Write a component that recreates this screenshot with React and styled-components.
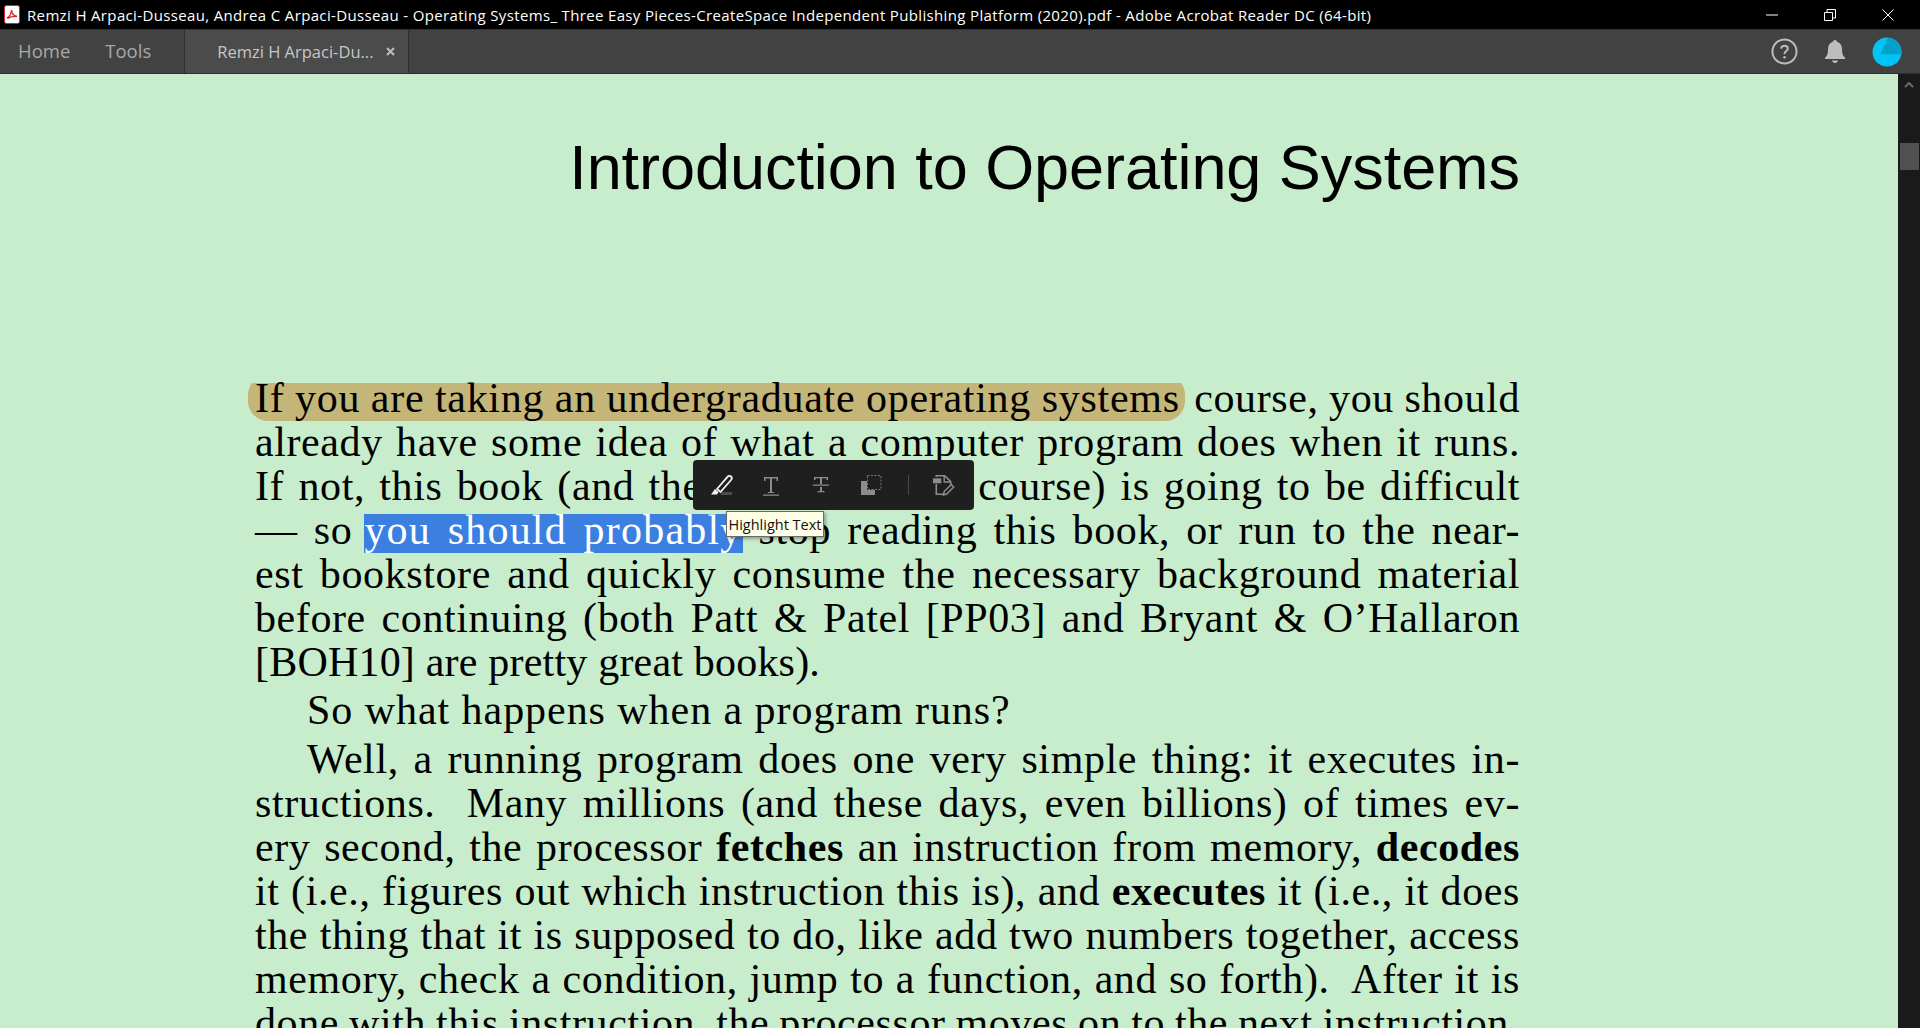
import React from 'react'
import styled, { createGlobalStyle } from 'styled-components'

const Global = createGlobalStyle`
html,body{margin:0;padding:0;height:100%;overflow:hidden;background:#000;}
#root{height:100%;}
`
const Window = styled.div`
width:1920px;
height:1028px;
display:flex;
flex-direction:column;
overflow:hidden;
font-family:"Open Sans","Noto Sans",sans-serif;
`
const TitleBar = styled.div`
height:29px;
flex:none;
background:#000;
color:#fff;
display:flex;
align-items:center;
padding:0 3px 0 4px;
font-size:15px;
letter-spacing:0.35px;
white-space:nowrap;
`
const TitleText = styled.span`
margin-left:6px;
flex:1;
`
const WinButton = styled.div`
width:58px;
height:29px;
display:flex;
align-items:center;
justify-content:center;
`
const TabBar = styled.div`
height:43px;
flex:none;
background:#424242;
border-top:1px solid #333;
border-bottom:1px solid #2e2e2e;
display:flex;
align-items:stretch;
`
const NavTab = styled.div`
color:#a8a8a8;
font-size:18.5px;
display:flex;
align-items:center;
padding-bottom:2px;
margin-left:${props=>props.$left}px;
`
const DocTab = styled.div`
width:225px;
margin-left:33px;
background:#4b4b4b;
border-left:1px solid #2e2e2e;
border-right:1px solid #2e2e2e;
color:#c6c6c6;
font-size:16.5px;
display:flex;
align-items:center;
padding:0 0 1px 32px;
box-sizing:border-box;
white-space:nowrap;
`
const TabClose = styled.span`
margin-left:12px;
display:flex;
`
const TabIcons = styled.div`
margin-left:auto;
display:flex;
align-items:center;
padding-right:18px;
`
const HelpSlot = styled.div`
display:flex;
margin-right:26px;
`
const BellSlot = styled.div`
display:flex;
margin-right:26px;
`
const Viewer = styled.div`
flex:1;
display:flex;
min-height:0;
`
const Page = styled.div`
flex:1;
background:#c7edcc;
padding:56px 378px 0 255px;
overflow:hidden;
position:relative;
color:#000;
`
const Heading = styled.h1`
margin:0 0 172px;
font-family:"Liberation Sans",Arial,sans-serif;
font-weight:400;
font-size:63px;
line-height:74px;
text-align:right;
letter-spacing:-0.05px;
`
const Para = styled.div`
margin-top:${props=>props.$gap||0}px;
font-family:"Liberation Serif","Times New Roman",serif;
font-size:42px;
`
const Line = styled.div`
height:44px;
line-height:44px;
letter-spacing:${props=>props.$track??0.6}px;
word-spacing:${props=>props.$last?0:-3}px;
text-align:${props=>props.$last?'left':'justify'};
text-align-last:${props=>props.$last?'left':'justify'};
padding-left:${props=>props.$indent?52:0}px;
`
const Marked = styled.span`
background:linear-gradient(#c4b578,#c4b578) 0 calc(50% + 5px)/100% 40px no-repeat;
border-radius:20px;
letter-spacing:0.72px;
padding:0 5px 0 7px;
margin:0 -1px 0 -7px;
`
const Selected = styled.span`
background:linear-gradient(#3b80e0,#3b80e0) 0 calc(50% + 4px)/100% 41px no-repeat;
color:#fff;
letter-spacing:1.2px;
margin-left:-4px;
`
const FloatBar = styled.div`
position:absolute;
left:693px;
top:386px;
width:281px;
height:50px;
background:#1f1f1f;
border-radius:4px;
display:flex;
align-items:center;
box-sizing:border-box;
padding-left:3px;
`
const FloatIcon = styled.div`
width:50px;
height:30px;
flex:none;
display:flex;
align-items:center;
justify-content:center;
`
const FloatSep = styled.div`
width:1px;
height:20px;
background:#4a4a4a;
margin:0 9px 0 12px;
`
const Tip = styled.div`
position:absolute;
left:726px;
top:437px;
width:98px;
height:26px;
box-sizing:border-box;
background:#ffffe6;
border:1px solid #6a6a6a;
box-shadow:2px 2px 3px rgba(0,0,0,0.3);
font-size:14.5px;
color:#111;
display:flex;
align-items:center;
justify-content:center;
white-space:nowrap;
`
const Scroll = styled.div`
width:22px;
flex:none;
background:#1a1a1a;
display:flex;
flex-direction:column;
align-items:flex-end;
`
const ScrollUp = styled.div`
height:69px;
width:22px;
padding-top:7px;
box-sizing:border-box;
display:flex;
justify-content:center;
`
const Thumb = styled.div`
width:19px;
height:27px;
background:#505050;
margin-right:1px;
`

const PdfIcon = () => (
  <svg width="17" height="19" viewBox="0 0 17 19">
    <rect x="0.5" y="0.5" width="15" height="18" rx="2" fill="#fff" stroke="#d9232e" />
    <path d="M3 13c2-1 4-4 4.500-7.500M7.500 5c0 3 2 5.500 5.500 6.500-3-.5-6 0-9.500 2" fill="none" stroke="#d9232e" strokeWidth="1.400" />
  </svg>
)
const HelpIcon = () => (
  <svg width="27" height="27" viewBox="0 0 28 28">
    <circle cx="14" cy="14" r="12.500" fill="none" stroke="#bdbdbd" strokeWidth="2" />
    <path d="M10.500 11c.3-2 1.700-3 3.500-3 2 0 3.500 1.200 3.500 3 0 2.600-3.500 2.600-3.500 5.500" fill="none" stroke="#bdbdbd" strokeWidth="2" />
    <circle cx="14" cy="20" r="1.300" fill="#bdbdbd" />
  </svg>
)
const BellIcon = () => (
  <svg width="22" height="26" viewBox="0 0 22 26">
    <path d="M11 1c1.200 0 2 .8 2 1.800C16.500 3.800 18 6.500 18 10c0 5 1 7 3 8.500V20H1v-1.500C3 17 4 15 4 10c0-3.500 1.500-6.200 5-7.200C9 1.800 9.800 1 11 1z" fill="#bdbdbd" />
    <path d="M8 21.500h6c-.3 1.600-1.500 2.500-3 2.500s-2.700-.9-3-2.500z" fill="#bdbdbd" />
  </svg>
)
const Avatar = () => (
  <svg width="30" height="30" viewBox="0 0 30 30">
    <circle cx="15" cy="15" r="14.500" fill="#00c4f5" />
    <path d="M15.700 .7A14.500 14.500 0 0 1 29.500 17.300H8.700z" fill="#02a0c8" />
  </svg>
)
const Mark = ({ d, children }) => (
  <svg width="26" height="24" viewBox="0 0 26 24" fill="none">
    {d && <path d={d} fill="#8c8c8c" />}
    {children}
  </svg>
)

const body = [
  { lines: [
    [<Marked key="m">If you are taking an undergraduate operating systems</Marked>, ' course, you should'],
    'already have some idea of what a computer program does when it runs.',
    'If not, this book (and the corresponding course) is going to be difficult',
    ['— so ', <Selected key="s">you should probably</Selected>, ' stop reading this book, or run to the near-'],
    'est bookstore and quickly consume the necessary background material',
    'before continuing (both Patt & Patel [PP03] and Bryant & O’Hallaron',
  ], last: '[BOH10] are pretty great books).', track: 0.2 },
  { gap: 4, indent: true, last: 'So what happens when a program runs?', track: 0.95 },
  { gap: 5, first: 'Well, a running program does one very simple thing: it executes in-', lines: [
    'structions.\u00a0 Many millions (and these days, even billions) of times ev-',
    ['ery second, the processor ', <b key="a">fetches</b>, ' an instruction from memory, ', <b key="b">decodes</b>],
    ['it (i.e., figures out which instruction this is), and ', <b key="c">executes</b>, ' it (i.e., it does'],
    'the thing that it is supposed to do, like add two numbers together, access',
    'memory, check a condition, jump to a function, and so forth).\u00a0 After it is',
    'done with this instruction, the processor moves on to the next instruction,',
  ] },
]

export default function App() {
  return (
    <Window>
      <Global />
      <TitleBar>
        <PdfIcon />
        <TitleText>Remzi H Arpaci-Dusseau, Andrea C Arpaci-Dusseau - Operating Systems_ Three Easy Pieces-CreateSpace Independent Publishing Platform (2020).pdf - Adobe Acrobat Reader DC (64-bit)</TitleText>
        <WinButton>
          <svg width="12" height="2"><rect width="12" height="1" y="0.500" fill="#fff" /></svg>
        </WinButton>
        <WinButton>
          <svg width="12" height="12" fill="none" stroke="#fff"><path d="M0.500 3.500h8v8h-8zM3 3V0.500h8.500V9H9" /></svg>
        </WinButton>
        <WinButton>
          <svg width="12" height="12" stroke="#fff"><path d="M0.500 0.500l11 11M11.500 0.500l-11 11" /></svg>
        </WinButton>
      </TitleBar>
      <TabBar>
        <NavTab $left={18}>Home</NavTab>
        <NavTab $left={35}>Tools</NavTab>
        <DocTab>
          Remzi H Arpaci-Du...
          <TabClose>
            <svg width="9" height="9" stroke="#bdbdbd" strokeWidth="2"><path d="M1 1l7 7M8 1l-7 7" /></svg>
          </TabClose>
        </DocTab>
        <TabIcons>
          <HelpSlot><HelpIcon /></HelpSlot>
          <BellSlot><BellIcon /></BellSlot>
          <Avatar />
        </TabIcons>
      </TabBar>
      <Viewer>
        <Page>
          <Heading>Introduction to Operating Systems</Heading>
          {body.map((p, i) => (
            <Para key={i} $gap={p.gap}>
              {p.first && <Line $indent>{p.first}</Line>}
              {p.lines && p.lines.map((l, j) => <Line key={j}>{l}</Line>)}
              {p.last && <Line $last $indent={p.indent} $track={p.track}>{p.last}</Line>}
            </Para>
          ))}
          <FloatBar>
            <FloatIcon>
              <svg width="24" height="24" viewBox="0 0 24 24" fill="none">
                <path d="M8 16L18.500 3.800c1-1.200 2.600-1.200 3.500-.3s1 2.300 0 3.500L11.500 19z" stroke="#f2f2f2" strokeWidth="1.800" />
                <path d="M2 21.500l4-5.500 3.500 3-1.500 2.500z" fill="#f2f2f2" />
                <rect x="12" y="19" width="11" height="3" fill="#4d4d4d" />
              </svg>
            </FloatIcon>
            <FloatIcon>
              <Mark d="M6 4h14v4h-1.500V5.500H14V19h2v1H10v-1h2V5.500H7.500V8H6zM5 21.500h16v1.200H5z" />
            </FloatIcon>
            <FloatIcon>
              <Mark d="M6 4h14v3h-1.500V5.200H14V11h-2V5.200H7.500V7H6zM5 11.500h16v1.200H5zM12 14h2v4h2.500v1.200h-7V18H12z" />
            </FloatIcon>
            <FloatIcon>
              <Mark d="M3 8h6v9h8v5H3z">
                <rect x="9.500" y="2.500" width="13.500" height="14" stroke="#7a7a7a" strokeDasharray="2 1.500" />
              </Mark>
            </FloatIcon>
            <FloatSep />
            <FloatIcon>
              <Mark d="M3 5.300h8.300v5H3z">
                <path d="M6.300 4V2.700h8.400l6 6v2.500M6.300 11v10.300h7" stroke="#8c8c8c" strokeWidth="1.600" />
                <path d="M14.200 3v6h6" stroke="#8c8c8c" strokeWidth="1.400" />
                <path d="M13.500 22l.7-3.500 7-7 2.500 2.500-7 7z" stroke="#8c8c8c" strokeWidth="1.500" />
              </Mark>
            </FloatIcon>
          </FloatBar>
          <Tip>Highlight Text</Tip>
        </Page>
        <Scroll>
          <ScrollUp>
            <svg width="10" height="7" fill="none" stroke="#6a6a6a" strokeWidth="2"><path d="M1 6l4-4 4 4" /></svg>
          </ScrollUp>
          <Thumb />
        </Scroll>
      </Viewer>
    </Window>
  )
}
